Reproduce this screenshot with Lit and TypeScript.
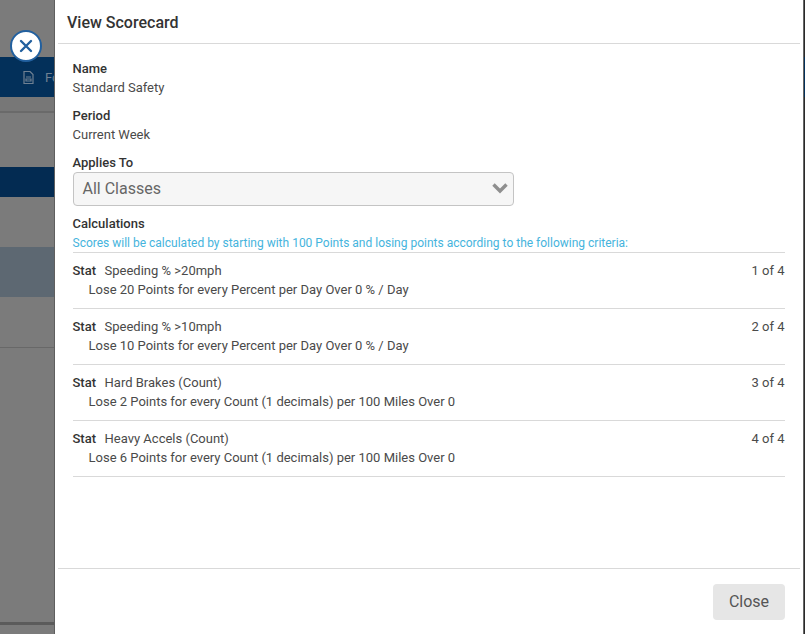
import { LitElement, html, css } from "lit";
import { customElement } from "lit/decorators.js";

const rows = [
  ["Speeding % >20mph", "Lose 20 Points for every Percent per Day Over 0 % / Day", "1 of 4"],
  ["Speeding % >10mph", "Lose 10 Points for every Percent per Day Over 0 % / Day", "2 of 4"],
  ["Hard Brakes (Count)", "Lose 2 Points for every Count (1 decimals) per 100 Miles Over 0", "3 of 4"],
  ["Heavy Accels (Count)", "Lose 6 Points for every Count (1 decimals) per 100 Miles Over 0", "4 of 4"],
];

@customElement("app-root")
export class AppRoot extends LitElement {
  static styles = css`
    :host { display: flex; width: 805px; height: 634px; overflow: hidden; position: relative;
      font-family: Roboto, "Liberation Sans", sans-serif; color: #4a4a4a; font-size: 13px; }
    .back { width: 54px; flex: none; display: flex; flex-direction: column; background: #7b7b7b; border-right: 1px solid #5f5f5f; }
    .b { flex: none; }
    .b1 { height: 57px; }
    .nav { height: 40px; background: #03305a; display: flex; align-items: center; color: #6f8092; font-size: 13px; overflow: hidden; padding-left: 23px; gap: 11px; }
    .b2 { height: 14px; background: #777; border-bottom: 2px solid #6a6a6a; }
    .b3 { height: 54px; }
    .sel { height: 30px; background: #032b52; }
    .b4 { height: 50px; }
    .hl { height: 50px; background: #5d6872; }
    .b5 { height: 50px; border-bottom: 1px solid #686868; }
    .b6 { height: 274px; border-bottom: 3px solid #5b5b5b; }
    .fab { position: absolute; left: 10px; top: 30px; width: 32px; height: 32px; box-sizing: border-box; border-radius: 50%; background: #fff; border: 2px solid #22609f; box-shadow: inset 0 0 0 1px #fff; display: flex; align-items: center; justify-content: center; }
    .panel { flex: 1; background: #fff; display: flex; flex-direction: column; min-width: 0; }
    .edge { width: 1px; flex: none; background: #2a2a2a; border-left: 1px solid #666; display: flex; flex-direction: column; }
    .e1 { height: 57px; flex: none; }
    .e2 { height: 40px; flex: none; background: #03305a; }
    .head { height: 44px; flex: none; margin: 0 3px; box-sizing: border-box; border-bottom: 1px solid #d9d9d9; padding: 2px 0 0 9px; display: flex; align-items: center; font-size: 16px; font-weight: 500; color: #333; }
    .body { flex: 1; padding: 16px 18px 0 17.500px; display: flex; flex-direction: column; }
    .lbl { font-weight: 500; line-height: 18px; color: #333; }
    .val { line-height: 18px; margin-top: 1px; margin-bottom: 10px; }
    .select { height: 34px; flex: none; width: 441.500px; box-sizing: border-box; border: 1px solid #c4c4c4; border-radius: 4px; background: #f6f6f6; display: flex; align-items: center; justify-content: space-between; padding: 0 4px 2px 9px; font-size: 16px; color: #666; margin-bottom: 9px; }
    .hint { color: #45b4dd; font-size: 12px; line-height: 16px; margin-top: 2px; height: 17px; border-bottom: 1px solid #d9d9d9; flex: none; }
    .row { height: 46px; flex: none; border-bottom: 1px solid #d9d9d9; padding-top: 9px; }
    .r1 { display: flex; line-height: 18px; }
    .r1 b { font-weight: 500; margin-right: 8.500px; color: #333; }
    .r1 .n { margin-left: auto; padding-right: .5px; }
    .r2 { margin-top: 1px; padding-left: 16px; line-height: 18px; }
    .foot { height: 50px; flex: none; margin: 0 3px; border-top: 1px solid #d9d9d9; display: flex; justify-content: flex-end; align-items: flex-start; padding: 15px 15px 0 0; }
    .btn { width: 72px; height: 36px; box-sizing: border-box; padding-bottom: 2px; background: #e6e6e6; border-radius: 4px; display: flex; align-items: center; justify-content: center; font-size: 16px; color: #555; }
  `;
  render() {
    return html`
      <div class="back">
        <div class="b b1"></div>
        <div class="b nav">
          <svg width="11" height="13" viewBox="0 0 11 13" style="flex:none"><path d="M1 .5h6l3 3v9H1z M3 6h5M3 8h5v2H3z" fill="none" stroke="#6f8092" stroke-width="1.200"/></svg>
          <span>Fo</span>
        </div>
        <div class="b b2"></div>
        <div class="b b3"></div>
        <div class="b sel"></div>
        <div class="b b4"></div>
        <div class="b hl"></div>
        <div class="b b5"></div>
        <div class="b b6"></div>
      </div>
      <div class="fab">
        <svg width="18" height="18" viewBox="0 0 18 18"><path d="M4 4l10 10M14 4L4 14" stroke="#22609f" stroke-width="2.400" stroke-linecap="round"/></svg>
      </div>
      <div class="panel">
        <div class="head">View Scorecard</div>
        <div class="body">
          <div class="lbl">Name</div>
          <div class="val">Standard Safety</div>
          <div class="lbl">Period</div>
          <div class="val">Current Week</div>
          <div class="lbl">Applies To</div>
          <div class="select"><span>All Classes</span>
            <svg width="18" height="12" viewBox="0 0 18 12"><path d="M2.500 2.500L9 9l6.500-6.500" fill="none" stroke="#8f8f8f" stroke-width="3.400"/></svg>
          </div>
          <div class="lbl">Calculations</div>
          <div class="hint">Scores will be calculated by starting with 100 Points and losing points according to the following criteria:</div>
          ${rows.map(r => html`<div class="row">
            <div class="r1"><b>Stat</b><span>${r[0]}</span><span class="n">${r[2]}</span></div>
            <div class="r2">${r[1]}</div>
          </div>`)}
        </div>
        <div class="foot"><div class="btn">Close</div></div>
      </div>
      <div class="edge"><div class="e1"></div><div class="e2"></div></div>
    `;
  }
}
